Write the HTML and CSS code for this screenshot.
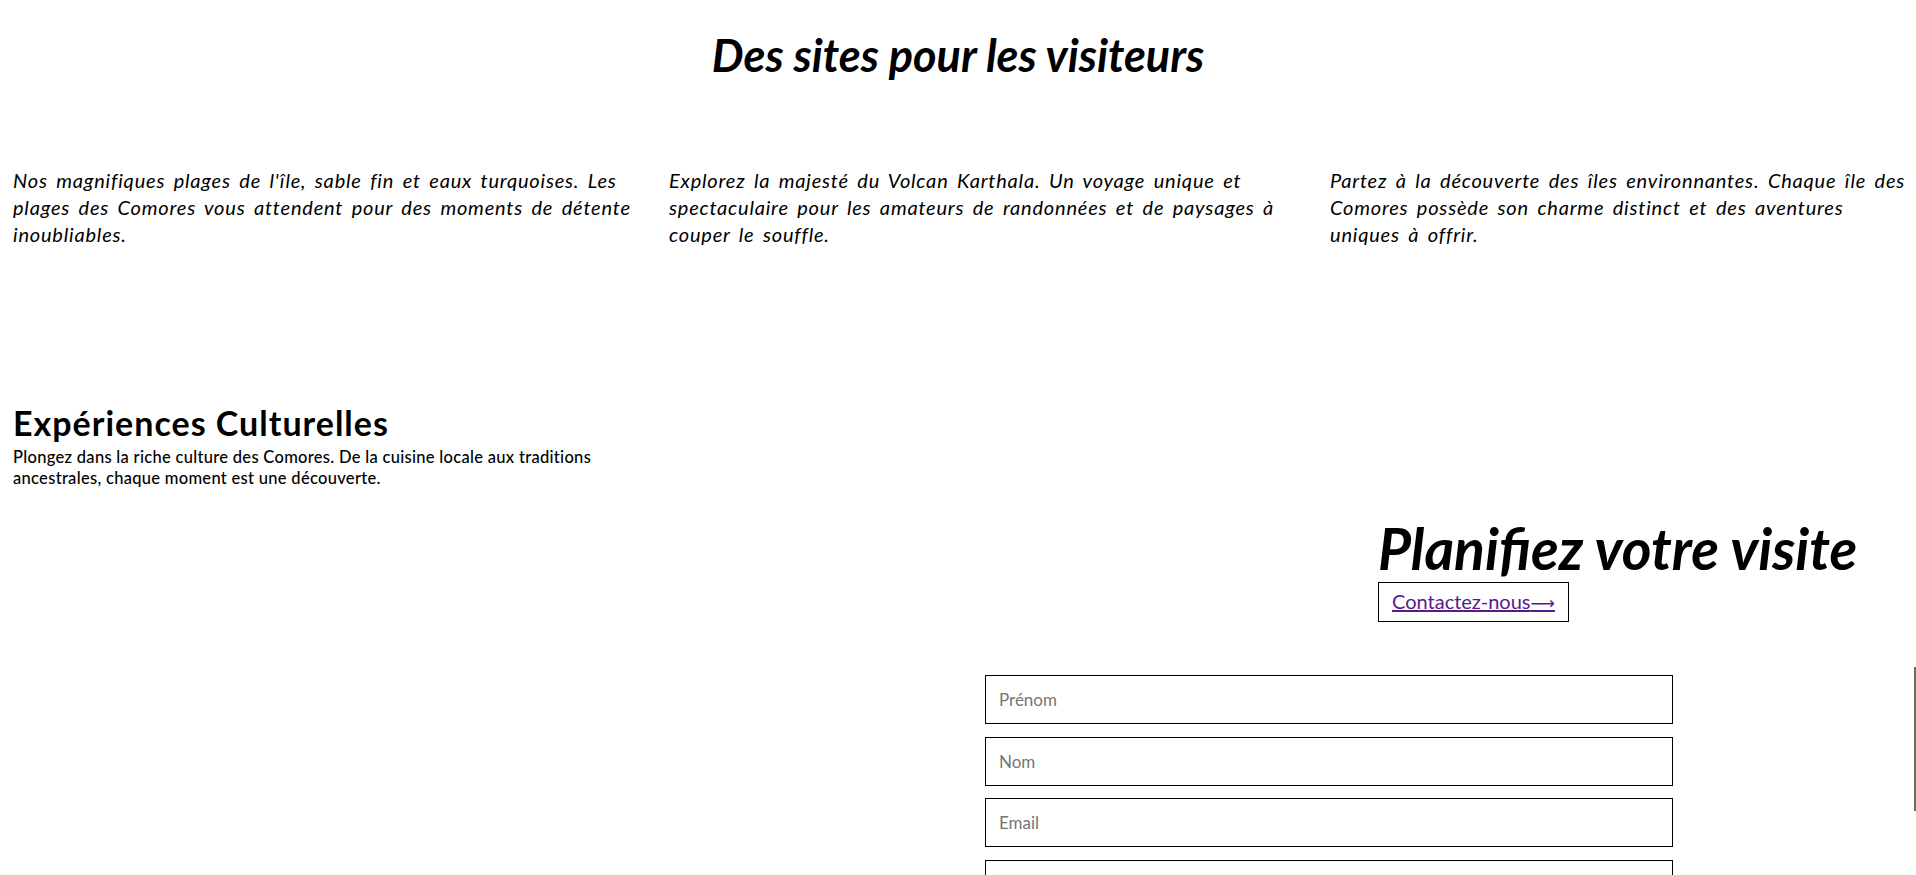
FILE: index.html
```html
<!DOCTYPE html>
<html>
<head>
  <title>Comores - Visiter</title>
  <meta charset="utf-8">
  <meta name="viewport" content="width=device-width, initial-scale=1.0">
  <link rel="stylesheet" href="styles.css">
</head>
<body>
  <h1 class="sites-title">Des sites pour les visiteurs</h1>
  <div class="sites">
    <p>Nos magnifiques plages de l'île, sable fin et eaux turquoises. Les plages des Comores vous attendent pour des moments de détente inoubliables.</p>
    <p>Explorez la majesté du Volcan Karthala. Un voyage unique et spectaculaire pour les amateurs de randonnées et de paysages à couper le souffle.</p>
    <p>Partez à la découverte des îles environnantes. Chaque île des Comores possède son charme distinct et des aventures uniques à offrir.</p>
  </div>
  <div class="culture">
    <h2>Expériences Culturelles</h2>
    <p>Plongez dans la riche culture des Comores. De la cuisine locale aux traditions ancestrales, chaque moment est une découverte.</p>
  </div>
  <div class="plan">
    <h2>Planifiez votre visite</h2>
    <div class="contact-box"><a href="#contact">Contactez-nous<span class="arrow">⟶</span></a></div>
  </div>
  <form class="contact-form" id="contact">
    <input type="text" placeholder="Prénom">
    <input type="text" placeholder="Nom">
    <input type="email" placeholder="Email">
    <input type="text" placeholder="">
  </form>
  <div class="scroll-mark"></div>
</body>
</html>
```

FILE: styles.css
```css
html { overflow: hidden; }
html, body { height: 100%; }
body { margin: 0; padding: 0 13px; font-family: Lato, "Open Sans", sans-serif; color: #000; background: #fff; overflow: hidden; position: relative; }

.sites-title { text-align: center; font-style: italic; font-weight: 700; font-size: 45px; line-height: 56px; margin: 27px 0 0; }

.sites { display: grid; grid-template-columns: 640px 645px 1fr; column-gap: 16px; margin: 84px -13px 0 0; }
.sites p { margin: 0; font-style: italic; font-size: 20px; line-height: 27px; letter-spacing: 0.8px; word-spacing: 3px; }

.culture { width: 640px; margin-top: 157px; }
.culture h2 { margin: 0; font-size: 34px; line-height: 36px; font-weight: 700; letter-spacing: 1px; }
.culture p { margin: 6px 0 0; font-size: 16.5px; line-height: 21px; font-weight: 500; letter-spacing: 0.3px; }

.plan { margin: 29px 0 0 1365px; }
.plan h2 { margin: 0; font-style: italic; font-weight: 700; font-size: 57px; line-height: 60px; }
.contact-box { display: inline-block; margin-top: 4px; border: 1px solid #000; padding: 6px 13px 6px; }
.contact-box a { color: #551a8b; font-size: 20px; line-height: 24px; }
.contact-box .arrow { font-family: "DejaVu Sans", sans-serif; font-size: 17px; }

.contact-form { width: 688px; margin: 53px 0 0 972px; }
.contact-form input { display: block; box-sizing: border-box; width: 100%; height: 49px; margin: 0 0 12.5px; padding: 0 13px; border: 1px solid #000; font-family: Lato, "Open Sans", sans-serif; font-size: 17px; outline: none; }
.contact-form input::placeholder { color: #757575; }

.scroll-mark { position: absolute; right: 0; top: 667px; width: 2px; height: 144px; background: #6b6b6b; }
```
